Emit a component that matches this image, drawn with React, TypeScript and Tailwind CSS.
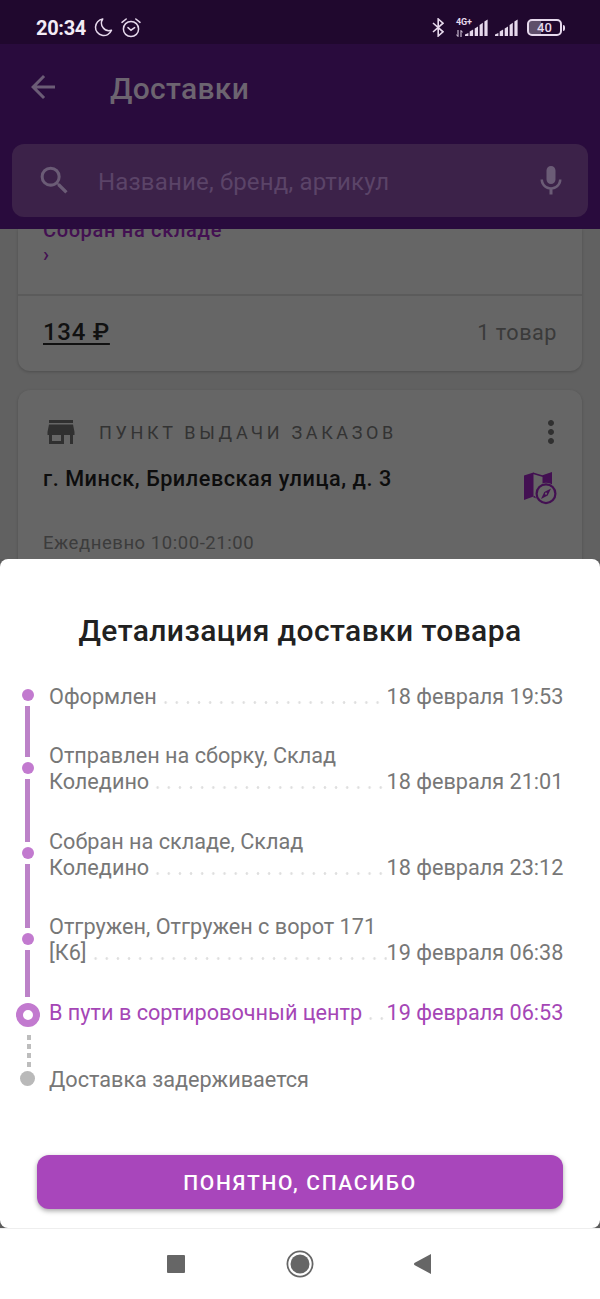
import React from 'react';
import { MdArrowBack, MdMic, MdMoreVert, MdSearch, MdStore } from 'react-icons/md';

type StepState = 'done' | 'current' | 'pending';

interface Step {
  lines: string[];
  date?: string;
  state: StepState;
}

const steps: Step[] = [
  { lines: ['Оформлен'], date: '18 февраля 19:53', state: 'done' },
  { lines: ['Отправлен на сборку, Склад', 'Коледино'], date: '18 февраля 21:01', state: 'done' },
  { lines: ['Собран на складе, Склад', 'Коледино'], date: '18 февраля 23:12', state: 'done' },
  { lines: ['Отгружен, Отгружен с ворот 171', '[К6]'], date: '19 февраля 06:38', state: 'done' },
  { lines: ['В пути в сортировочный центр'], date: '19 февраля 06:53', state: 'current' },
  { lines: ['Доставка задерживается'], state: 'pending' },
];

const Signal = () => (
  <svg width="23" height="17" viewBox="0 0 23 17" fill="currentColor">
    <path d="M0 17v-1.5L3.4 14v3z" />
    <path d="M4.7 17v-4.5l3.4-2V17z" />
    <path d="M9.7 17V9.5l3.3-2V17z" />
    <path d="M14.6 17V6l3.2-2.2V17z" />
    <path d="M19.4 17V2.6L22.6.5V17z" />
  </svg>
);

const StatusBar = () => (
  <div className="flex h-11 shrink-0 items-center bg-[#20082e] pl-9 pr-[35px] pt-[11px] text-[#e6d9ec]">
    <span className="w-[58px] text-[20px] font-bold leading-none tracking-[-0.3px] text-[#f3ecf6]">20:34</span>
    <svg width="19" height="19" viewBox="0 0 18 19" fill="none" stroke="currentColor" strokeWidth="1.5" strokeLinejoin="round">
      <path d="M8.2 1A8.3 8.3 0 1 0 17 12.3 7.6 7.6 0 0 1 8.2 1z" />
    </svg>
    <svg className="ml-2" width="20" height="20" viewBox="0 0 20 20" fill="none" stroke="currentColor" strokeWidth="1.5" strokeLinecap="round">
      <circle cx="10" cy="11" r="7.6" />
      <path d="M7 9.6l3 2.6 3.6-2.6M1 4.4L5.2 1M19 4.4L14.8 1" />
    </svg>
    <div className="ml-auto flex items-center">
      <svg width="12" height="19" viewBox="0 0 12 19" fill="none" stroke="currentColor" strokeWidth="1.6">
        <path d="M1 5l10 8.8L6.2 18V1L11 5.2 1 14" />
      </svg>
      <div className="ml-3 flex h-[19px] w-[9px] flex-col justify-between">
        <span className="text-[9px] font-bold leading-[9px] tracking-[-0.1px]">4G+</span>
        <svg width="7" height="7" viewBox="0 0 7 7" fill="none" stroke="currentColor" strokeWidth="1">
          <path d="M2 0v6.5L.4 4.6M5 7V.5l1.6 1.9" />
        </svg>
      </div>
      <Signal />
      <span className="w-[7px]" />
      <Signal />
      <div className="ml-[9px] flex items-center">
        <div className="flex h-[17px] w-[35px] items-center justify-center rounded-[5px] border-2 border-current bg-linear-to-r from-[#5f4f6a] from-40% to-transparent to-40% text-[13px] font-medium leading-none">
          40
        </div>
        <span className="ml-px h-[6px] w-[2px] rounded-r-sm bg-current" />
      </div>
    </div>
  </div>
);

const Header = () => (
  <header className="h-[185px] shrink-0 bg-[#290b3d] px-3">
    <div className="flex h-[100px] items-center pb-[14px] pl-[13px]">
      <MdArrowBack size={36} className="text-[#6b5c76]" />
      <h1 className="ml-[49px] pt-1 text-[30px] font-medium leading-none tracking-[0.3px] text-[#6c6470]">Доставки</h1>
    </div>
    <div className="flex h-[73px] items-center rounded-xl bg-[#3c2249] pl-6 pr-[19px] text-[#6b5c76]">
      <MdSearch size={37} />
      <span className="ml-[25px] pt-0.5 text-[24px] leading-none tracking-[0.17px] text-[#5b4468]">Название, бренд, артикул</span>
      <MdMic size={36} className="ml-auto" />
    </div>
  </header>
);

const MapIcon = () => (
  <svg width="33" height="33" viewBox="0 0 33 33" fill="none">
    <path d="M0 3.5L9.5.5v24L0 28z" fill="#431052" />
    <path d="M18.5 3.2L28 0v17h-9.5z" fill="#431052" />
    <path d="M9 1.2l10 3M9.5 24.5l4 1.5" stroke="#431052" strokeWidth="1.6" />
    <circle cx="22" cy="21.7" r="11" fill="#666" />
    <circle cx="22" cy="21.7" r="9.4" stroke="#431052" strokeWidth="2.2" />
    <path d="M27 16.5l-3.3 7-6.7 3.5 3.3-7z" fill="#431052" />
    <circle cx="22" cy="21.7" r="1.1" fill="#666" />
  </svg>
);

const Deliveries = () => (
  <main className="flex h-[330px] shrink-0 flex-col gap-[19px] overflow-hidden bg-[#616161] px-[18px]">
    <section className="h-[142px] shrink-0 rounded-b-xl bg-[#666] shadow-[0_1px_3px_rgba(0,0,0,0.2)]">
      <div className="flex h-[67px] items-start border-b-2 border-[#5b5b5b] px-[25px]">
        <p className="-mt-[11px] text-[20px] font-medium leading-[24px] tracking-[0.7px] text-[#431052]">
          Собран на складе
          <br />›
        </p>
      </div>
      <div className="flex h-[75px] items-center justify-between px-[25px] pb-[3px]">
        <span className="text-[24px] font-medium leading-none tracking-[0.7px] text-[#111] underline decoration-[1.5px] underline-offset-[3px]">134 ₽</span>
        <span className="pt-[2px] text-[21.67px] leading-none tracking-[0.5px] text-[#3a3a3a]">1 товар</span>
      </div>
    </section>
    <section className="h-[180px] shrink-0 rounded-t-xl bg-[#666] px-[25px] pt-6 shadow-[0_1px_3px_rgba(0,0,0,0.2)]">
      <div className="flex h-9 items-center">
        <MdStore size={36} className="text-[#303030]" />
        <span className="ml-5 pt-px text-[18px] leading-none tracking-[3.65px] text-[#333]">ПУНКТ ВЫДАЧИ ЗАКАЗОВ</span>
        <MdMoreVert size={36} className="-mr-3 ml-auto text-[#303030]" />
      </div>
      <div className="flex h-[76px] items-start justify-between">
        <p className="pt-[15px] text-[21.67px] font-medium leading-7 tracking-[0.55px] text-[#0d0d0d]">г. Минск, Брилевская улица, д. 3</p>
        <div className="mt-[22px]">
          <MapIcon />
        </div>
      </div>
      <p className="mt-[5px] text-[18.5px] leading-6 tracking-[0.55px] text-[#3c3c3c]">Ежедневно 10:00-21:00</p>
    </section>
  </main>
);

const Dot = () => <span className="h-3 w-3 shrink-0 rounded-full bg-[#c27acf]" />;

// Column of dots and connecting bars to the left of the steps
const Rail = () => (
  <div className="mt-[5.5px] flex w-[55px] shrink-0 flex-col items-center">
    <Dot />
    <span className="my-[5px] h-[51px] w-[5px] bg-[#bc82c8]" />
    <Dot />
    <span className="my-[5px] h-[63.5px] w-[5px] bg-[#bc82c8]" />
    <Dot />
    <span className="my-[5px] h-[63.5px] w-[5px] bg-[#bc82c8]" />
    <Dot />
    <span className="mb-[6px] mt-[5px] h-[47px] w-[5px] bg-[#bc82c8]" />
    <span className="h-6 w-6 rounded-full border-[7.5px] border-[#c27acf]" />
    <div className="my-2 ml-[3px] flex w-[4px] flex-col gap-1">
      {[0, 1, 2, 3].map((i) => (
        <span key={i} className="h-[5px] bg-[#bdbdbd]" />
      ))}
    </div>
    <span className="-mt-[4px] h-[15px] w-[15px] rounded-full bg-[#b9b9b9]" />
  </div>
);

const StepRow = ({ step }: { step: Step }) => {
  const last = step.lines[step.lines.length - 1];
  return (
    <li className={step.state === 'current' ? 'text-[#a546b6]' : 'text-[#777]'}>
      {step.lines.length > 1 && <div>{step.lines[0]}</div>}
      <div className="flex">
        <span>{last}</span>
        {step.date && (
          <>
            <span className="ml-[3px] mt-[17px] h-[3px] flex-1 bg-[radial-gradient(circle,#dedede_1px,transparent_1.6px)] bg-[size:11.17px_3px] bg-repeat-x" />
            <span className="w-[176.5px]">{step.date}</span>
          </>
        )}
      </div>
    </li>
  );
};

const DetailsSheet = () => (
  <div className="h-[669px] shrink-0 bg-[#5c5c5c]">
    <div className="flex h-full flex-col rounded-lg bg-white">
      <h2 className="mt-[54px] text-center text-[30px] font-medium leading-9 tracking-[0.4px] text-[#212121]">Детализация доставки товара</h2>
      <div className="mt-[34px] flex pr-[37px]">
        <Rail />
        <ul className="-ml-[6px] mt-[0.6px] flex flex-1 flex-col gap-[34.3px] whitespace-nowrap text-[21.67px] leading-[25.6px] [&>li:last-child]:mt-[7px]">
          {steps.map((step, i) => (
            <StepRow key={i} step={step} />
          ))}
        </ul>
      </div>
      <button className="mx-[37px] mb-[19px] mt-auto h-[54px] rounded-xl bg-[#a846bb] pt-[3px] text-[21px] font-medium tracking-[1.7px] text-white shadow-[0_2px_5px_rgba(0,0,0,0.35)]">
        ПОНЯТНО, СПАСИБО
      </button>
    </div>
  </div>
);

const NavBar = () => (
  <nav className="flex h-[71px] items-center border-t border-[#eee] bg-white pl-[166.5px] text-[#666]">
    <span className="h-[18px] w-[18px] rounded-[1px] bg-current" />
    <svg className="ml-[101.5px]" width="28" height="28" viewBox="0 0 28 28">
      <circle cx="14" cy="14" r="12.6" fill="none" stroke="currentColor" strokeWidth="1.8" />
      <circle cx="14" cy="14" r="9.5" fill="currentColor" />
    </svg>
    <svg className="ml-[100px]" width="17" height="20" viewBox="0 0 17 20" fill="currentColor">
      <path d="M17 0v20L.8 11.2a1.3 1.3 0 0 1 0-2.4z" />
    </svg>
  </nav>
);

const App: React.FC = () => {
  return (
    <div className="flex h-[1299px] w-[600px] flex-col overflow-hidden bg-white font-['Roboto',sans-serif]">
      <StatusBar />
      <Header />
      <Deliveries />
      <DetailsSheet />
      <NavBar />
    </div>
  );
};

export default App;
